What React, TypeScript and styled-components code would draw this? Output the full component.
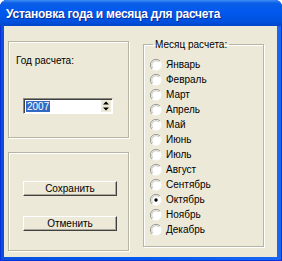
import React from "react";
import styled, { createGlobalStyle } from "styled-components";

const MONTHS = [
  "Январь",
  "Февраль",
  "Март",
  "Апрель",
  "Май",
  "Июнь",
  "Июль",
  "Август",
  "Сентябрь",
  "Октябрь",
  "Ноябрь",
  "Декабрь",
];

const SELECTED_MONTH = 9;

const GlobalStyle = createGlobalStyle`
  html, body {
    margin: 0;
    padding: 0;
    width: 282px;
    height: 261px;
    overflow: hidden;
    background: #ffffff;
  }
  body {
    font-family: "Liberation Sans", "DejaVu Sans", sans-serif;
    font-size: 10px;
    color: #000000;
  }
`;

const RadioMark = ({ checked }: { checked: boolean }) => (
  <svg width="12" height="12" viewBox="0 0 12 12">
    <circle cx="6" cy="6" r="5.5" fill="#ffffff" />
    <path d="M10 2 A5.5 5.5 0 0 0 2 10" fill="none" stroke="#9a9a92" strokeWidth="1" />
    <path d="M9 3 A4.2 4.2 0 0 0 3 9" fill="none" stroke="#c8c6bc" strokeWidth="1" />
    {checked && <circle cx="6" cy="6" r="1.7" fill="#000000" />}
  </svg>
);

const SpinArrows = () => (
  <svg width="10" height="12" viewBox="0 0 10 12">
    <path d="M5 1.5 L8 4.5 L2 4.5 Z" fill="#000000" />
    <path d="M5 10.5 L8 7.5 L2 7.5 Z" fill="#000000" />
  </svg>
);

const App = () => (
  <>
    <GlobalStyle />
    <Window>
      <TitleBar>Установка года и месяца для расчета</TitleBar>
      <Client>
        <LeftColumn>
          <Panel $height={97}>
            <YearLabel>Год расчета:</YearLabel>
            <SpinBox>
              <SpinValue>
                <Selection>2007</Selection>
              </SpinValue>
              <SpinButton>
                <SpinArrows />
              </SpinButton>
            </SpinBox>
          </Panel>
          <Panel $height={99}>
            <ButtonStack>
              <PushButton>Сохранить</PushButton>
              <PushButton>Отменить</PushButton>
            </ButtonStack>
          </Panel>
        </LeftColumn>
        <MonthGroup>
          <MonthLegend>Месяц расчета:</MonthLegend>
          <MonthList>
            {MONTHS.map((month, i) => (
              <MonthRow key={month}>
                <RadioMark checked={i === SELECTED_MONTH} />
                <span>{month}</span>
              </MonthRow>
            ))}
          </MonthList>
        </MonthGroup>
      </Client>
    </Window>
  </>
);

export default App;

const Window = styled.div`
  width: 282px;
  height: 261px;
  box-sizing: border-box;
  display: flex;
  flex-direction: column;
  background: linear-gradient(to right, #0a50dc 0%, #0058ee 40%, #1a66f2 100%);
  border-radius: 7px 7px 0 0;
  box-shadow: inset 0 0 0 1px #0831d9;
  overflow: hidden;
`;

const TitleBar = styled.div`
  height: 26px;
  flex: none;
  display: flex;
  align-items: center;
  padding: 1px 0 0 6px;
  box-sizing: border-box;
  background: linear-gradient(
    to bottom,
    #3d8ef7 0%,
    #0b5fe6 12%,
    #0058ee 45%,
    #0052e0 80%,
    #0046cc 100%
  );
  color: #ffffff;
  font-family: "Liberation Sans", "DejaVu Sans", sans-serif;
  font-weight: bold;
  font-size: 12px;
  letter-spacing: -0.25px;
  text-shadow: 1px 1px 0 #0a2a90;
  white-space: nowrap;
`;

const Client = styled.div`
  flex: 1;
  margin: 0 5px 4px 4px;
  background: #ece9d8;
  display: flex;
  align-items: flex-start;
  gap: 14px;
  padding: 12px 0 0 4px;
`;

const LeftColumn = styled.div`
  width: 121px;
  margin-top: 3px;
  display: flex;
  flex-direction: column;
  gap: 14px;
`;

const Panel = styled.div<{ $height: number }>`
  height: ${({ $height }) => $height + "px"};
  box-sizing: border-box;
  border: 1px solid #b8b4a4;
  box-shadow: inset 1px 1px 0 #ffffff, 1px 1px 0 #ffffff;
`;

const YearLabel = styled.div`
  margin: 12px 0 0 7px;
  line-height: 13px;
`;

const SpinBox = styled.div`
  width: 90px;
  height: 16px;
  box-sizing: border-box;
  margin: 31px 0 0 14px;
  display: flex;
  align-items: stretch;
  background: #ffffff;
  border-top: 1px solid #8c8a80;
  border-left: 1px solid #8c8a80;
  border-right: 1px solid #ffffff;
  border-bottom: 1px solid #ffffff;
  box-shadow: inset 1px 1px 0 #404040;
  padding: 2px 1px 1px 2px;
`;

const SpinValue = styled.div`
  flex: 1;
  display: flex;
  align-items: center;
  line-height: 11px;
`;

const Selection = styled.span`
  background: #316ac5;
  color: #ffffff;
  padding: 0 1px;
`;

const SpinButton = styled.div`
  width: 10px;
  background: #ece9d8;
  display: flex;
  align-items: center;
  justify-content: center;
  margin-top: -1px;
`;

const ButtonStack = styled.div`
  display: flex;
  flex-direction: column;
  gap: 20px;
  padding: 28px 0 0 14px;
`;

const PushButton = styled.button`
  width: 94px;
  height: 15px;
  padding: 0;
  margin: 0;
  font-family: "Liberation Sans", "DejaVu Sans", sans-serif;
  font-size: 10px;
  line-height: 13px;
  color: #000000;
  background: #ece9d8;
  border-top: 1px solid #ffffff;
  border-left: 1px solid #ffffff;
  border-right: 1px solid #404040;
  border-bottom: 1px solid #404040;
  box-shadow: inset -1px -1px 0 #aca899;
  box-sizing: border-box;
`;

const MonthGroup = styled.fieldset`
  width: 121px;
  height: 209px;
  box-sizing: border-box;
  margin: 0;
  padding: 0 0 0 6px;
  border: 1px solid #b8b4a4;
  box-shadow: inset 1px 1px 0 #ffffff, 1px 1px 0 #ffffff;
  min-width: 0;
`;

const MonthLegend = styled.legend`
  margin-left: 3px;
  padding: 0 2px;
  line-height: 13px;
`;

const MonthList = styled.div`
  display: flex;
  flex-direction: column;
  padding-top: 6px;
`;

const MonthRow = styled.label`
  height: 15px;
  display: flex;
  align-items: center;
  gap: 4px;
  line-height: 13px;
`;
